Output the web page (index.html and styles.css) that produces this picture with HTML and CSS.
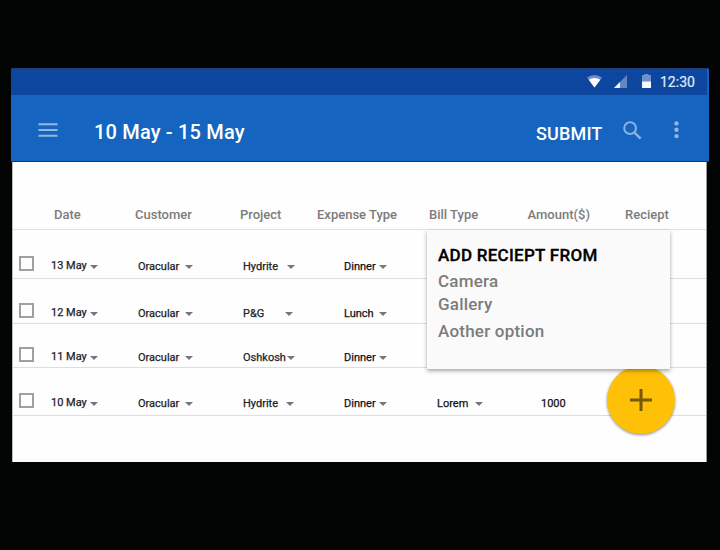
FILE: index.html
```
<!DOCTYPE html>
<html lang="en">
<head>
<meta charset="utf-8">
<title>Expenses</title>
<link rel="stylesheet" href="styles.css">
</head>
<body>
<main class="device">
  <header class="top">
    <div class="status">
      <svg class="wifi" width="15" height="13" viewBox="0 0 15 13"><path d="M0 2.5Q7.5-2.5 15 2.5L7.5 12.5z" fill="#6f8fc8"/><path d="M1.7 4.8Q7.5 1.4 13.3 4.8L7.5 12.5z" fill="#fff"/></svg>
      <svg class="signal" width="13" height="13" viewBox="0 0 13 13"><path d="M13 0V13H0z" fill="#6486c3"/><path d="M6 7V13H0z" fill="#f2f5fb"/></svg>
      <svg class="battery" width="9" height="14" viewBox="0 0 9 14"><path d="M2.5 0h4v1H9v7H0V1h2.5z" fill="#6f8fc8"/><path d="M0 7.5h9V14H0z" fill="#f5f8ff"/></svg>
      <span class="clock">12:30</span>
    </div>
    <div class="bar">
      <svg class="menu" width="20" height="14" viewBox="0 0 20 14"><path d="M0.5 1.3h19M0.5 7h19M0.5 12.7h19" stroke="#94b6e1" stroke-width="2"/></svg>
      <h1 class="title">10 May - 15 May</h1>
      <span class="submit">SUBMIT</span>
      <svg class="search" width="19" height="19" viewBox="0 0 19 19" fill="none" stroke="#8db1df"><circle cx="7.1" cy="7.1" r="5.9" stroke-width="2"/><path d="M11.3 11.3L17.6 17.6" stroke-width="2.5"/></svg>
      <svg class="more" width="5" height="18" viewBox="0 0 5 18" fill="#94b6e1"><circle cx="2.5" cy="2.4" r="2.2"/><circle cx="2.5" cy="8.8" r="2.2"/><circle cx="2.5" cy="15.1" r="2.2"/></svg>
    </div>
  </header>
  <section class="sheet">
    <div class="head">
      <span>Date</span><span>Customer</span><span>Project</span><span>Expense Type</span><span>Bill Type</span><span>Amount($)</span><span>Reciept</span>
    </div>
    <div class="row r1">
      <i class="check"></i>
      <span class="cell date">13 May<i class="arrow"></i></span>
      <span class="cell customer">Oracular<i class="arrow"></i></span>
      <span class="cell project">Hydrite<i class="arrow"></i></span>
      <span class="cell expense">Dinner<i class="arrow"></i></span>
    </div>
    <div class="row r2">
      <i class="check"></i>
      <span class="cell date">12 May<i class="arrow"></i></span>
      <span class="cell customer">Oracular<i class="arrow"></i></span>
      <span class="cell project">P&amp;G<i class="arrow"></i></span>
      <span class="cell expense">Lunch<i class="arrow"></i></span>
    </div>
    <div class="row r3">
      <i class="check"></i>
      <span class="cell date">11 May<i class="arrow"></i></span>
      <span class="cell customer">Oracular<i class="arrow"></i></span>
      <span class="cell project">Oshkosh<i class="arrow"></i></span>
      <span class="cell expense">Dinner<i class="arrow"></i></span>
    </div>
    <div class="row r4">
      <i class="check"></i>
      <span class="cell date">10 May<i class="arrow"></i></span>
      <span class="cell customer">Oracular<i class="arrow"></i></span>
      <span class="cell project">Hydrite<i class="arrow"></i></span>
      <span class="cell expense">Dinner<i class="arrow"></i></span>
      <span class="cell bill">Lorem<i class="arrow"></i></span>
      <span class="cell amount">1000</span>
    </div>
  </section>
</main>
<button class="fab" aria-label="Add"><svg width="22" height="22" viewBox="0 0 22 22"><path d="M11 0v22M0 11h22" stroke="#735703" stroke-width="3"/></svg></button>
<div class="popup">
  <strong>ADD RECIEPT FROM</strong>
  <span class="camera">Camera</span>
  <span class="gallery">Gallery</span>
  <span class="other">Aother option</span>
</div>
</body>
</html>
```
FILE: styles.css
```
* { box-sizing: border-box; }
body {
  margin: 0;
  height: 550px;
  overflow: hidden;
  position: relative;
  background: #020503;
  border-bottom: 1px solid #110006;
  font-family: Roboto, sans-serif;
  font-weight: 500;
  padding: 68px 0 0 11px;
}
.device { width: 698px; }
.top {
  height: 94px;
  background: #1565c0;
  border-bottom: 1px solid #0c3a78;
  border-radius: 2px 2px 0 0;
}
.status {
  height: 27px;
  width: 696px;
  background: #0d469f;
  border-top: 1px solid #1b3c75;
  border-radius: 2px 0 0 0;
  display: flex;
  align-items: center;
  padding: 0 0 1px 576px;
}
.signal { margin-left: 12px; }
.battery { margin: 0 0 2px 15px; }
.clock {
  margin-left: 9px;
  color: #e3eaf6;
  font-size: 14px;
  font-weight: 400;
  line-height: 20px;
  -webkit-text-stroke: 0.2px;
}
.bar {
  height: 66px;
  display: flex;
  align-items: center;
  padding: 7px 0 0 27px;
}
.menu { margin: 0 0 3px; }
.title {
  width: 442px;
  margin: 1px 0 0 36px;
  font-size: 20px;
  font-weight: 500;
  line-height: 24px;
  letter-spacing: 0.18px;
  color: #fff;
}
.submit {
  width: 67px;
  font-size: 18px;
  line-height: 22px;
  letter-spacing: 0.15px;
  padding-top: 4px;
  color: #fff;
}
.search { margin: 0 0 3px 20px; }
.more { margin: 0 0 3px 32px; }
.sheet {
  margin-left: 1px;
  width: 695px;
  height: 300px;
  background: #fefefe;
  border-left: 1px solid #bbb;
  border-right: 1px solid #999;
}
.head {
  height: 68px;
  border-bottom: 1px solid #e1e1e1;
  display: grid;
  grid-template-columns: 81px 105px 77px 112px 98.5px 97.5px 80px;
  padding: 44px 0 0 41px;
  font-size: 13px;
  line-height: 17px;
  color: #7c7c7c;
  white-space: nowrap;
}
.row {
  display: grid;
  grid-template-columns: 32px 87px 105px 101px 93px 104px 100px;
  align-items: end;
  padding-left: 6px;
  border-bottom: 1px solid #dedede;
  font-size: 11px;
  font-weight: 400;
  line-height: 13px;
  color: #222;
  -webkit-text-stroke: 0.25px;
}
.r1 { height: 49px; padding-bottom: 5px; }
.r2 { height: 45px; padding-bottom: 3px; }
.r3 { height: 44px; padding-bottom: 3px; }
.r4 { height: 48px; padding-bottom: 5px; }
.check {
  width: 15px;
  height: 15px;
  border: 2px solid #a0a0a0;
  margin-bottom: 2px;
}
.cell {
  display: flex;
  justify-content: space-between;
  align-items: center;
  white-space: nowrap;
}
.arrow {
  flex: none;
  border: 4px solid transparent;
  border-top-color: #777;
  border-bottom: 0;
  margin-top: 1px;
}
.date { width: 47px; margin-bottom: 1px; }
.date .arrow { margin-top: 3px; }
.customer { width: 55px; }
.project { width: 52px; }
.expense { width: 43px; color: #111; }
.bill { width: 46px; color: #111; }
.amount { color: #111; }
.r2 .project { width: 50px; }
.r3 .project { width: 52px; }
.r4 .project { width: 51px; }
.popup {
  position: absolute;
  left: 427px;
  top: 230px;
  width: 243px;
  height: 139px;
  background: #fafafa;
  box-shadow: 0 2px 4px rgba(0, 0, 0, .35);
  padding: 14px 0 0 11px;
  display: flex;
  flex-direction: column;
  font-size: 17px;
  line-height: 22px;
  letter-spacing: 0.22px;
  color: #7c7c7c;
}
.popup strong { font-weight: 500; letter-spacing: 0.27px; color: #000; -webkit-text-stroke: 0.3px; }
.camera { margin-top: 4px; }
.gallery { margin-top: 1px; }
.other { margin-top: 5px; }
.fab {
  position: absolute;
  left: 607px;
  top: 366px;
  width: 68px;
  height: 68px;
  border: 0;
  border-radius: 50%;
  padding: 0;
  background: #ffc107;
  box-shadow: 0 1px 3px rgba(0, 0, 0, .45);
  display: flex;
  align-items: center;
  justify-content: center;
}
```
